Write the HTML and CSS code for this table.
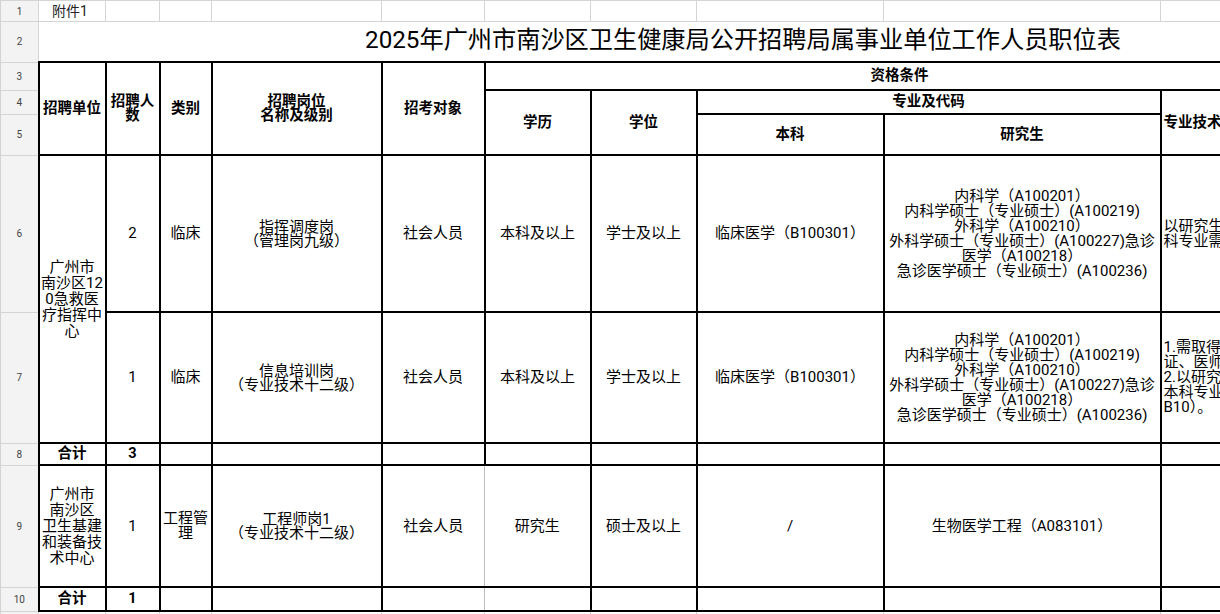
FILE: index.html
```html
<!DOCTYPE html>
<html lang="zh-CN">
<head>
<meta charset="utf-8">
<title>2025年广州市南沙区卫生健康局公开招聘局属事业单位工作人员职位表</title>
<link rel="stylesheet" href="styles.css">
</head>
<body>
<table class="sheet">
  <colgroup>
    <col class="c-rh"><col class="c-a"><col class="c-b"><col class="c-c"><col class="c-d"><col class="c-e"><col class="c-f"><col class="c-g"><col class="c-h"><col class="c-i"><col class="c-j"><col class="c-k">
  </colgroup>
  <tr class="r1">
    <td class="rh">1</td><td class="note">附件1</td><td></td><td></td><td></td><td></td><td></td><td></td><td></td><td></td><td></td><td></td>
  </tr>
  <tr class="r2">
    <td class="rh">2</td><td class="title" colspan="11">2025年广州市南沙区卫生健康局公开招聘局属事业单位工作人员职位表</td>
  </tr>
  <tr class="r3">
    <td class="rh">3</td>
    <td class="b hd" rowspan="3">招聘单位</td>
    <td class="b hd" rowspan="3">招聘人<br>数</td>
    <td class="b hd" rowspan="3">类别</td>
    <td class="b hd" rowspan="3">招聘岗位<br>名称及级别</td>
    <td class="b hd" rowspan="3">招考对象</td>
    <td class="b hd" colspan="5">资格条件</td>
    <td></td>
  </tr>
  <tr class="r4">
    <td class="rh">4</td>
    <td class="b hd" rowspan="2">学历</td>
    <td class="b hd" rowspan="2">学位</td>
    <td class="b hd" colspan="2">专业及代码</td>
    <td class="b hd left" rowspan="2">专业技术资格及其他要求</td>
    <td></td>
  </tr>
  <tr class="r5">
    <td class="rh">5</td>
    <td class="b hd">本科</td>
    <td class="b hd">研究生</td>
    <td></td>
  </tr>
  <tr class="r6">
    <td class="rh">6</td>
    <td class="b unit" rowspan="2">广州市<br>南沙区12<br>0急救医<br>疗指挥中<br>心</td>
    <td class="b">2</td>
    <td class="b">临床</td>
    <td class="b tight">指挥调度岗<br>（管理岗九级）</td>
    <td class="b">社会人员</td>
    <td class="b">本科及以上</td>
    <td class="b">学士及以上</td>
    <td class="b">临床医学（B100301）</td>
    <td class="b">内科学（A100201）<br>内科学硕士（专业硕士）(A100219)<br>外科学（A100210）<br>外科学硕士（专业硕士）(A100227)急诊<br>医学（A100218）<br>急诊医学硕士（专业硕士）(A100236)</td>
    <td class="b left">以研究生学历报考的，本<br>科专业需为临床医学（B100301）。</td>
    <td></td>
  </tr>
  <tr class="r7">
    <td class="rh">7</td>
    <td class="b">1</td>
    <td class="b">临床</td>
    <td class="b tight">信息培训岗<br>（专业技术十二级）</td>
    <td class="b">社会人员</td>
    <td class="b">本科及以上</td>
    <td class="b">学士及以上</td>
    <td class="b">临床医学（B100301）</td>
    <td class="b">内科学（A100201）<br>内科学硕士（专业硕士）(A100219)<br>外科学（A100210）<br>外科学硕士（专业硕士）(A100227)急诊<br>医学（A100218）<br>急诊医学硕士（专业硕士）(A100236)</td>
    <td class="b left">1.需取得医师资格证书、医师执业<br>证、医师规范化培训合格证；<br>2.以研究生学历报考的，<br>本科专业需为临床医学类（<br>B10）。</td>
    <td></td>
  </tr>
  <tr class="r8">
    <td class="rh">8</td>
    <td class="b hd">合计</td>
    <td class="b hd">3</td>
    <td class="b"></td><td class="b"></td><td class="b"></td><td class="b"></td><td class="b"></td><td class="b"></td><td class="b"></td><td class="b"></td>
    <td></td>
  </tr>
  <tr class="r9">
    <td class="rh">9</td>
    <td class="b unit">广州市<br>南沙区<br>卫生基建<br>和装备技<br>术中心</td>
    <td class="b">1</td>
    <td class="b">工程管<br>理</td>
    <td class="b tight">工程师岗1<br>（专业技术十二级）</td>
    <td class="b soft-r">社会人员</td>
    <td class="b soft-l">研究生</td>
    <td class="b">硕士及以上</td>
    <td class="b">/</td>
    <td class="b">生物医学工程（A083101）</td>
    <td class="b"></td>
    <td></td>
  </tr>
  <tr class="r10">
    <td class="rh">10</td>
    <td class="b hd">合计</td>
    <td class="b hd">1</td>
    <td class="b"></td><td class="b"></td><td class="b soft-r"></td><td class="b soft-l"></td><td class="b"></td><td class="b"></td><td class="b"></td><td class="b"></td>
    <td></td>
  </tr>
  <tr class="r11">
    <td class="rh">11</td><td></td><td></td><td></td><td></td><td></td><td></td><td></td><td></td><td></td><td></td><td></td>
  </tr>
</table>
</body>
</html>
```

FILE: styles.css
```css
html, body {
  margin: 0;
  padding: 0;
  background: #ffffff;
  overflow: hidden;
}

body {
  font-family: Roboto, "Noto Sans CJK SC", sans-serif;
  color: #000;
}

.sheet {
  border-collapse: collapse;
  table-layout: fixed;
  width: 1447px;
}

.c-rh { width: 38px; }
.c-a { width: 67px; }
.c-b { width: 54px; }
.c-c { width: 52px; }
.c-d { width: 170px; }
.c-e { width: 103px; }
.c-f { width: 106px; }
.c-g { width: 106px; }
.c-h { width: 187px; }
.c-i { width: 277px; }
.c-j { width: 154px; }
.c-k { width: 133px; }

.sheet td {
  border: 1px solid #d4d4d4;
  padding: 0 1px;
  text-align: center;
  vertical-align: middle;
  font-size: 15px;
  line-height: 15px;
  white-space: nowrap;
  overflow: hidden;
}

.r1 td { height: 20px; }
.r2 td { height: 35px; }
.r3 td { height: 26px; }
.r4 td { height: 22px; }
.r5 td { height: 39px; }
.r6 td { height: 155px; }
.r7 td { height: 129px; }
.r8 td { height: 20px; }
.r9 td { height: 120px; }
.r10 td { height: 22px; }
.r11 td { height: 30px; }

.sheet .rh {
  background: #f3f3f3;
  font-size: 10px;
  color: #444;
  border-color: #d4d4d4;
}

.sheet .note {
  font-size: 14px;
  color: #222;
  padding-right: 5px;
}

.sheet .title {
  font-size: 24.2px;
  line-height: 26px;
  padding-bottom: 4px;
}

.sheet .b {
  border: 2px solid #000;
}

.sheet .soft-r {
  border-right: 1px solid #bdbdbd;
}

.sheet .soft-l {
  border-left: 1px solid #bdbdbd;
}

.sheet .hd {
  font-weight: bold;
  font-size: 14.5px;
  line-height: 14px;
}

.sheet .unit {
  line-height: 16px;
}

.sheet .tight {
  line-height: 14px;
}

.sheet .left {
  text-align: left;
  padding-left: 2px;
}
```
